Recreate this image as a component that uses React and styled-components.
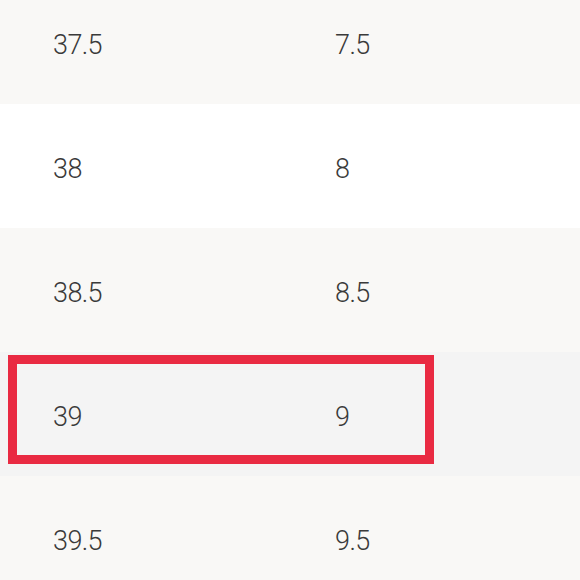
import React from 'react';
import styled, { createGlobalStyle } from 'styled-components';

const rows = [
  { eu: '37.5', us: '7.5' },
  { eu: '38', us: '8' },
  { eu: '38.5', us: '8.5' },
  { eu: '39', us: '9', selected: true },
  { eu: '39.5', us: '9.5' },
];

const App = () => {
  return (
    <>
      <GlobalStyle />
      <Table>
        {rows.map((row, i) => (
          <Row key={row.eu} $tone={row.selected ? 'selected' : i % 2 === 0 ? 'shade' : 'plain'}>
            <Cell>{row.eu}</Cell>
            <Cell>{row.us}</Cell>
            {row.selected && <Highlight />}
          </Row>
        ))}
      </Table>
    </>
  );
};

export default App;

// STYLED COMPONENTS
const GlobalStyle = createGlobalStyle`
  html, body {
    margin: 0;
    padding: 0;
    background: #ffffff;
    overflow: hidden;
  }
`;

const Table = styled.div`
  width: 580px;
  margin-top: -20px;
  display: flex;
  flex-direction: column;
`;

const tones = {
  shade: '#f9f8f6',
  plain: '#ffffff',
  selected: '#f4f4f4',
};

const Row = styled.div`
  position: relative;
  height: 124px;
  box-sizing: border-box;
  padding: 6px 0 0 53px;
  display: grid;
  grid-template-columns: 282px 1fr;
  align-items: center;
  background: ${(p) => tones[p.$tone]};
`;

const Cell = styled.div`
  font-family: Roboto, 'Liberation Sans', Arial, sans-serif;
  font-weight: 300;
  font-size: 27px;
  letter-spacing: -0.6px;
  color: #3a3a3a;
  line-height: 1;
`;

const Highlight = styled.div`
  position: absolute;
  left: 8px;
  top: 3px;
  width: 426px;
  height: 109px;
  box-sizing: border-box;
  border: 9px solid #e92a42;
`;
